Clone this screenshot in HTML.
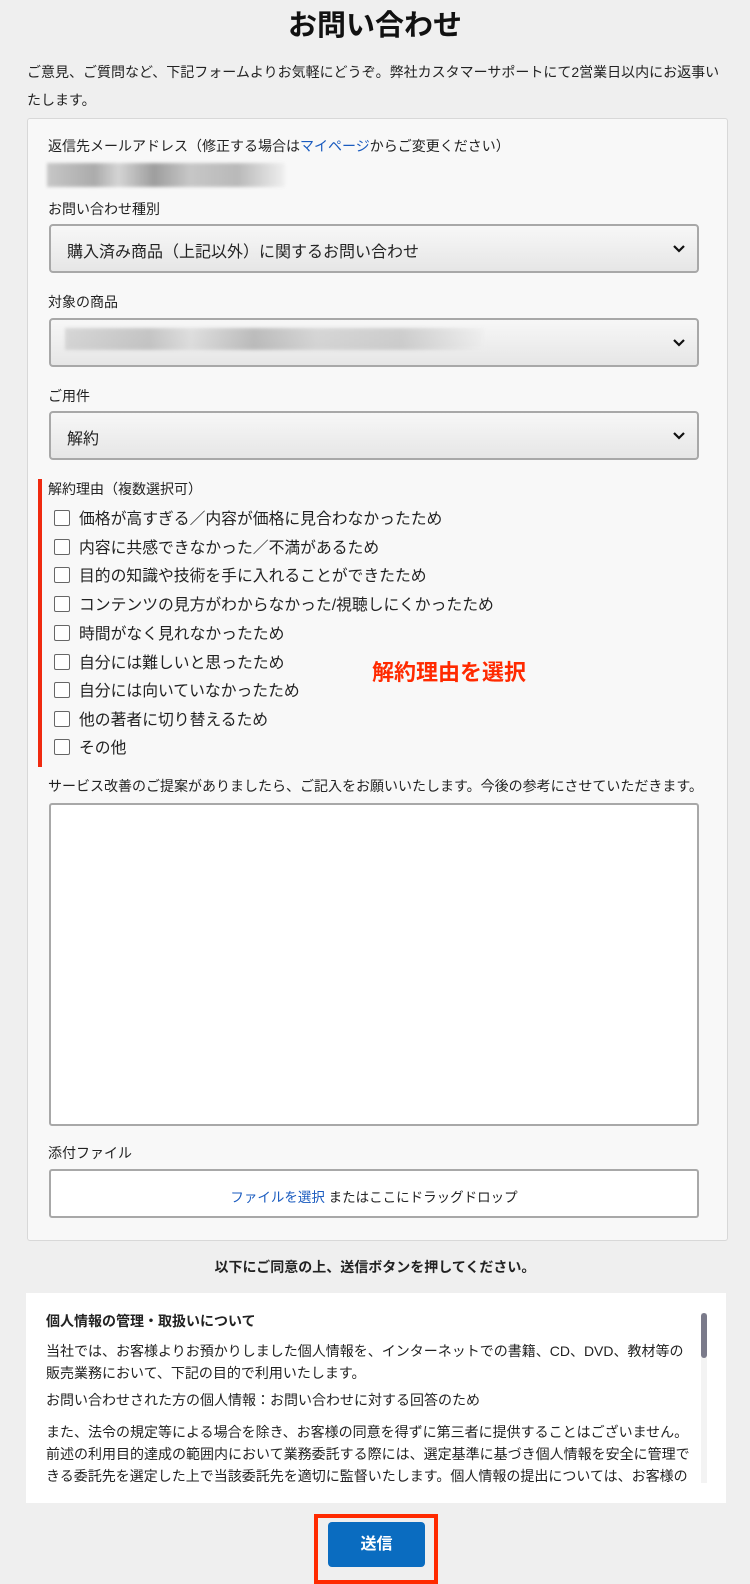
<!DOCTYPE html>
<html><head><meta charset="utf-8"><style>
*{margin:0;padding:0;box-sizing:border-box}
body{width:750px;height:1578px;background:#efefef;font-family:"Liberation Sans","Noto Sans CJK JP",sans-serif;color:#222;position:relative;overflow:hidden;font-size:14px}
.a{position:absolute;white-space:nowrap}
.card{position:absolute;left:27px;top:118px;width:701px;height:1123px;background:#f8f8f8;border:1px solid #d8d8d8;border-radius:3px}
.sel{position:absolute;left:49px;width:650px;height:49px;border:2px solid #a8a8a8;border-radius:4px;background:linear-gradient(#f7f7f7,#e6e6e6);font-size:16px;padding:12px 0 0 16px}
.sel svg{position:absolute;right:12px;top:18px}
.cb{position:absolute;left:54px;width:16px;height:16px;border:1.5px solid #666;border-radius:2px;background:#fff}
.ct{position:absolute;left:79px;font-size:15.8px;white-space:nowrap}
.blur{position:absolute;background:linear-gradient(90deg,#bbb,#999 20%,#ccc 30%,#888 45%,#bbb 60%,#aaa 80%,#eee);filter:blur(1.5px);opacity:.8}
</style></head><body>
<div class="a" style="left:0;width:750px;text-align:center;top:2px;font-size:29px;font-weight:bold;color:#111">お問い合わせ</div>
<div class="a" style="left:27px;top:58px;font-size:14px;line-height:28px;white-space:normal;width:694px">ご意見、ご質問など、下記フォームよりお気軽にどうぞ。弊社カスタマーサポートにて2営業日以内にお返事いたします。</div>
<div class="card"></div>
<div class="a" style="left:48px;top:136px;font-size:14px">返信先メールアドレス（修正する場合は<span style="color:#1a5bbf">マイページ</span>からご変更ください）</div>
<div class="blur" style="left:47px;top:163px;width:238px;height:24px"></div>
<div class="a" style="left:48px;top:199px;font-size:14px">お問い合わせ種別</div>
<div class="sel" style="top:224px">購入済み商品（上記以外）に関するお問い合わせ<svg width="12" height="10"><path d="M1 2l5 5 5-5" stroke="#111" stroke-width="2.2" fill="none"/></svg></div>
<div class="a" style="left:48px;top:292px;font-size:14px">対象の商品</div>
<div class="sel" style="top:318px"><div class="blur" style="left:14px;top:8px;width:420px;height:22px;opacity:.5"></div><svg width="12" height="10"><path d="M1 2l5 5 5-5" stroke="#111" stroke-width="2.2" fill="none"/></svg></div>
<div class="a" style="left:48px;top:386px;font-size:14px">ご用件</div>
<div class="sel" style="top:411px">解約<svg width="12" height="10"><path d="M1 2l5 5 5-5" stroke="#111" stroke-width="2.2" fill="none"/></svg></div>
<div class="a" style="left:38px;top:479px;width:4px;height:288px;background:#f02a10"></div>
<div class="a" style="left:48px;top:479px;font-size:14px">解約理由（複数選択可）</div>
<div class="cb" style="top:510px"></div><div class="ct" style="top:506px">価格が高すぎる／内容が価格に見合わなかったため</div>
<div class="cb" style="top:539px"></div><div class="ct" style="top:535px">内容に共感できなかった／不満があるため</div>
<div class="cb" style="top:567px"></div><div class="ct" style="top:563px">目的の知識や技術を手に入れることができたため</div>
<div class="cb" style="top:596px"></div><div class="ct" style="top:592px">コンテンツの見方がわからなかった/視聴しにくかったため</div>
<div class="cb" style="top:625px"></div><div class="ct" style="top:621px">時間がなく見れなかったため</div>
<div class="cb" style="top:654px"></div><div class="ct" style="top:650px">自分には難しいと思ったため</div>
<div class="cb" style="top:682px"></div><div class="ct" style="top:678px">自分には向いていなかったため</div>
<div class="cb" style="top:711px"></div><div class="ct" style="top:707px">他の著者に切り替えるため</div>
<div class="cb" style="top:739px"></div><div class="ct" style="top:735px">その他</div>
<div class="a" style="left:372px;top:655px;font-size:22px;font-weight:bold;color:#ff2a00">解約理由を選択</div>
<div class="a" style="left:48px;top:776px;font-size:14px">サービス改善のご提案がありましたら、ご記入をお願いいたします。今後の参考にさせていただきます。</div>
<div class="a" style="left:49px;top:803px;width:650px;height:323px;background:#fff;border:2px solid #a8a8a8;border-radius:3px"></div>
<div class="a" style="left:48px;top:1143px;font-size:14px">添付ファイル</div>
<div class="a" style="left:49px;top:1169px;width:650px;height:49px;background:#fff;border:2px solid #a8a8a8;border-radius:3px;text-align:center;padding-top:15px;font-size:13.5px"><span style="color:#1a5bbf">ファイルを選択</span> またはここにドラッグドロップ</div>
<div class="a" style="left:0;width:750px;text-align:center;top:1257px;font-size:14px;font-weight:bold">以下にご同意の上、送信ボタンを押してください。</div>
<div class="a" style="left:26px;top:1293px;width:700px;height:210px;background:#fff"></div>
<div class="a" style="left:701px;top:1313px;width:6px;height:170px;background:#f3f3f3"></div>
<div class="a" style="left:701px;top:1313px;width:6px;height:45px;background:#7a7a8a;border-radius:3px"></div>
<div class="a" style="left:46px;top:1311px;font-size:14px;font-weight:bold">個人情報の管理・取扱いについて</div>
<div class="a" style="left:46px;top:1340px;font-size:14px;line-height:22px;white-space:normal;width:645px">当社では、お客様よりお預かりしました個人情報を、インターネットでの書籍、CD、DVD、教材等の販売業務において、下記の目的で利用いたします。</div>
<div class="a" style="left:46px;top:1390px;font-size:14px">お問い合わせされた方の個人情報：お問い合わせに対する回答のため</div>
<div class="a" style="left:46px;top:1421px;font-size:14px;line-height:22px;white-space:normal;width:645px;height:64px;overflow:hidden">また、法令の規定等による場合を除き、お客様の同意を得ずに第三者に提供することはございません。前述の利用目的達成の範囲内において業務委託する際には、選定基準に基づき個人情報を安全に管理できる委託先を選定した上で当該委託先を適切に監督いたします。個人情報の提出については、お客様の</div>
<div class="a" style="left:314px;top:1514px;width:124px;height:70px;border:4px solid #ff2a00"></div>
<div class="a" style="left:328px;top:1522px;width:97px;height:45px;background:#0a6cc0;border-radius:4px;color:#fff;font-weight:bold;font-size:16px;text-align:center;line-height:45px">送信</div>
</body></html>
